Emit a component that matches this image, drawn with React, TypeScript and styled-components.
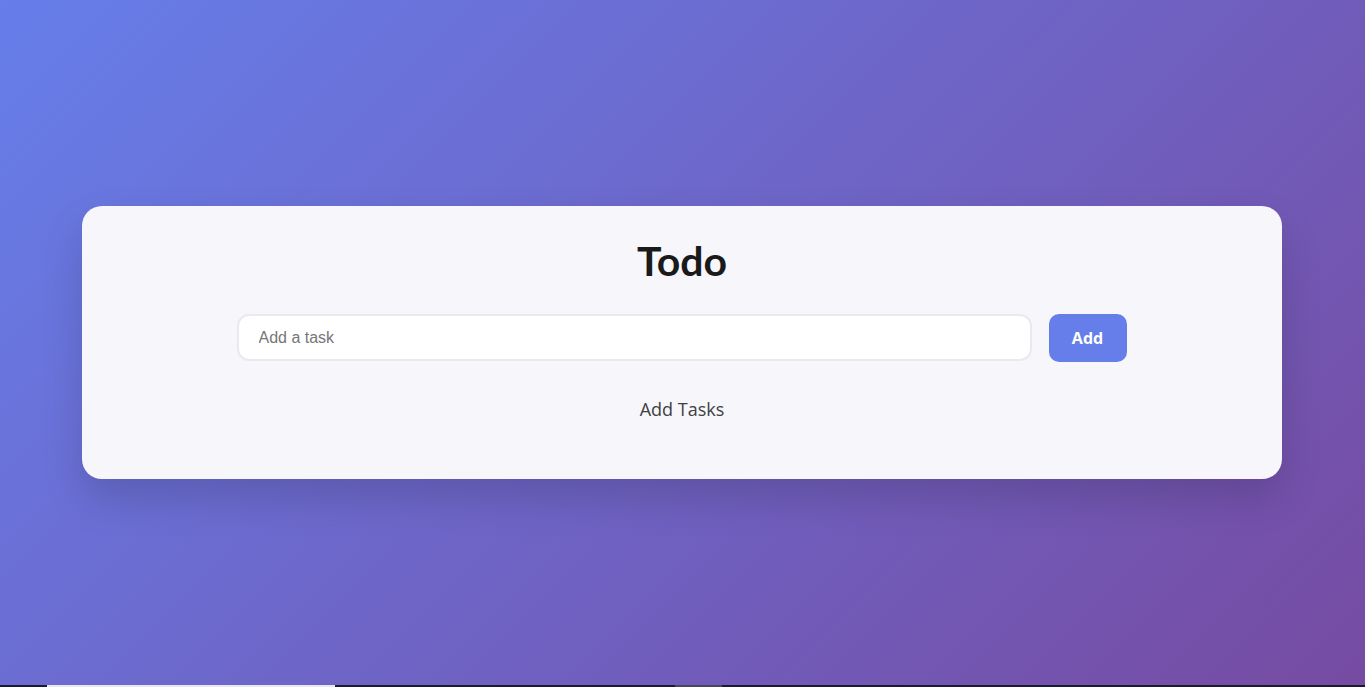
import type { FC } from 'react';
import styled, { createGlobalStyle } from 'styled-components';

const GlobalStyle = createGlobalStyle`
    html, body {
        margin: 0;
        padding: 0;
        height: 100%;
    }

    body {
        font-family: 'Open Sans', 'Noto Sans', sans-serif;
        overflow: hidden;
    }

    * {
        box-sizing: border-box;
    }
`;

const StyledPage = styled.div`
    height: 687px;
    display: flex;
    flex-direction: column;
`;

const StyledBackdrop = styled.main`
    flex: 1;
    display: flex;
    align-items: center;
    justify-content: center;
    padding: 0 83px 0 82px;
    background: linear-gradient(135deg, #667eea 0%, #764ba2 100%);
`;

const StyledCard = styled.section`
    width: 100%;
    height: 273px;
    padding: 30px 32px;
    border-radius: 20px;
    background: #f6f6fb;
    box-shadow: 0 20px 40px rgba(0, 0, 0, 0.15);
    display: flex;
    flex-direction: column;
    align-items: center;
`;

const StyledTitle = styled.h1`
    margin: 0 0 29px;
    font-family: Lato, 'Noto Sans', sans-serif;
    font-size: 41px;
    font-weight: 700;
    line-height: 1.2;
    color: #1a1a1a;
`;

const StyledForm = styled.form`
    width: 890px;
    margin-right: 1px;
    display: flex;
    gap: 17px;
`;

const StyledInput = styled.input`
    flex: 1;
    height: 47px;
    padding: 0 20px;
    border: 2px solid #e9e9ef;
    border-radius: 12px;
    background: #ffffff;
    font-family: 'Liberation Sans', Arial, sans-serif;
    font-size: 16px;
    color: #222;
    outline: none;

    &::placeholder {
        color: #767676;
    }
`;

const StyledButton = styled.button`
    width: 78px;
    height: 48px;
    border: none;
    border-radius: 10px;
    background: #667eea;
    color: #ffffff;
    font-family: 'Open Sans', 'Noto Sans', sans-serif;
    font-size: 16px;
    font-weight: 700;
    cursor: pointer;
`;

const StyledEmpty = styled.p`
    margin: 35px 0 0;
    font-family: 'Open Sans', 'Noto Sans', sans-serif;
    font-size: 18px;
    font-weight: 500;
    color: #404040;
`;

const StyledStrip = styled.div`
    height: 2px;
    display: flex;
    background: #1c1a33;
`;

const StyledStripPart = styled.span<{ $width: number; $color?: string }>`
    width: ${({ $width }) => $width}px;
    background: ${({ $color }) => $color ?? 'transparent'};
`;

const App: FC = () => {
    return (
        <StyledPage>
            <GlobalStyle />
            <StyledBackdrop>
                <StyledCard>
                    <StyledTitle>Todo</StyledTitle>
                    <StyledForm onSubmit={(e) => e.preventDefault()}>
                        <StyledInput type="text" placeholder="Add a task" />
                        <StyledButton type="submit">Add</StyledButton>
                    </StyledForm>
                    <StyledEmpty>Add Tasks</StyledEmpty>
                </StyledCard>
            </StyledBackdrop>
            <StyledStrip>
                <StyledStripPart $width={47} />
                <StyledStripPart $width={288} $color="#e8e8ee" />
                <StyledStripPart $width={340} />
                <StyledStripPart $width={47} $color="#4a4660" />
            </StyledStrip>
        </StyledPage>
    );
}

export default App;
